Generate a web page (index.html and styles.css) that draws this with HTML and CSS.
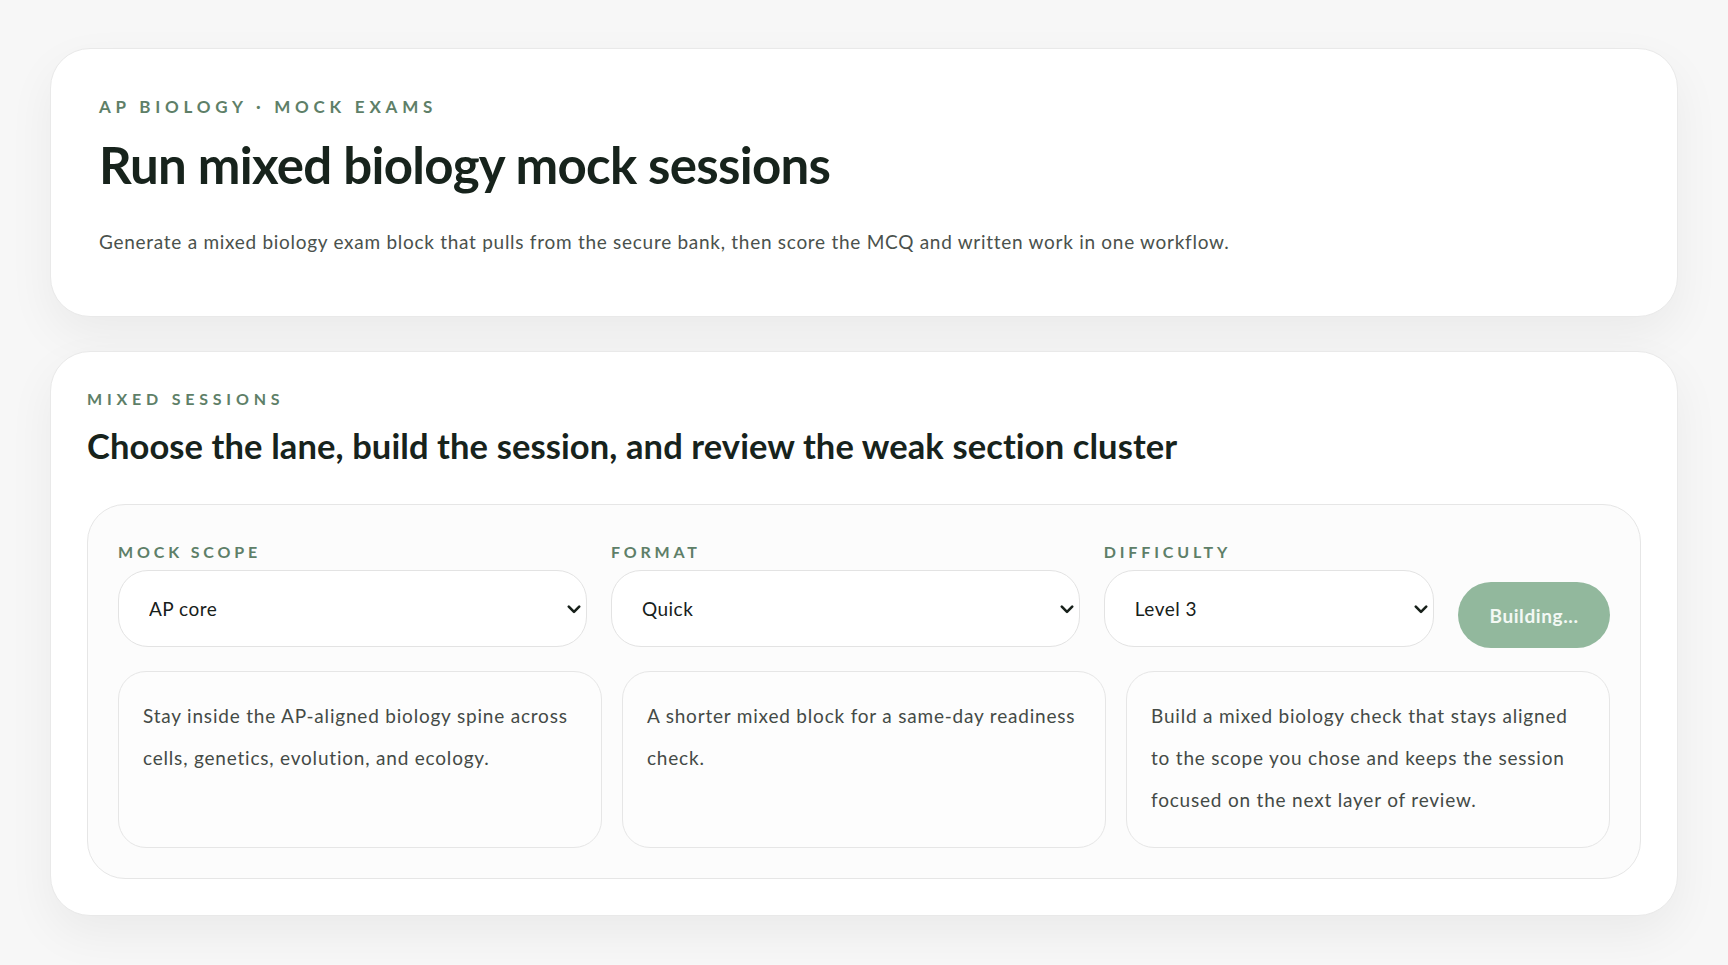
FILE: index.html
```html
<!DOCTYPE html>
<html lang="en">
<head>
<meta charset="utf-8">
<title>AP Biology · Mock Exams</title>
<link rel="stylesheet" href="styles.css">
</head>
<body>
<main class="page">
  <section class="card hero">
    <p class="eyebrow">AP Biology · Mock Exams</p>
    <h1 class="hero-title">Run mixed biology mock sessions</h1>
    <p class="hero-desc">Generate a mixed biology exam block that pulls from the secure bank, then score the MCQ and written work in one workflow.</p>
  </section>

  <section class="card sessions">
    <p class="eyebrow small">Mixed sessions</p>
    <h2 class="section-title">Choose the lane, build the session, and review the weak section cluster</h2>

    <div class="panel">
      <div class="controls">
        <label class="field">
          <span class="field-label">Mock scope</span>
          <span class="select-wrap">
            <select class="select">
              <option>AP core</option>
            </select>
            <svg class="chevron" width="14" height="9" viewBox="0 0 14 9" aria-hidden="true"><path d="M1.8 1.6 L7 6.8 L12.2 1.6" fill="none" stroke="#17201a" stroke-width="2.6" stroke-linecap="round" stroke-linejoin="round"/></svg>
          </span>
        </label>
        <label class="field">
          <span class="field-label">Format</span>
          <span class="select-wrap">
            <select class="select">
              <option>Quick</option>
            </select>
            <svg class="chevron" width="14" height="9" viewBox="0 0 14 9" aria-hidden="true"><path d="M1.8 1.6 L7 6.8 L12.2 1.6" fill="none" stroke="#17201a" stroke-width="2.6" stroke-linecap="round" stroke-linejoin="round"/></svg>
          </span>
        </label>
        <label class="field">
          <span class="field-label">Difficulty</span>
          <span class="select-wrap">
            <select class="select">
              <option>Level 3</option>
            </select>
            <svg class="chevron" width="14" height="9" viewBox="0 0 14 9" aria-hidden="true"><path d="M1.8 1.6 L7 6.8 L12.2 1.6" fill="none" stroke="#17201a" stroke-width="2.6" stroke-linecap="round" stroke-linejoin="round"/></svg>
          </span>
        </label>
        <button class="build-btn" type="button">Building...</button>
      </div>

      <div class="notes">
        <div class="note">Stay inside the AP-aligned biology spine across cells, genetics, evolution, and ecology.</div>
        <div class="note">A shorter mixed block for a same-day readiness check.</div>
        <div class="note">Build a mixed biology check that stays aligned to the scope you chose and keeps the session focused on the next layer of review.</div>
      </div>
    </div>
  </section>
</main>
</body>
</html>
```

FILE: styles.css
```css
* { box-sizing: border-box; }

html, body {
  margin: 0;
  padding: 0;
  background: #f7f7f7;
  font-family: "Lato", "Open Sans", sans-serif;
  color: #17231c;
}

.page {
  padding: 48px 50px 48px;
  display: flex;
  flex-direction: column;
  gap: 34px;
}

.card {
  background: #ffffff;
  border: 1px solid #e9e9e9;
  border-radius: 40px;
  box-shadow: 0 18px 48px rgba(0, 0, 0, 0.055);
}

.hero {
  padding: 47px 48px 60px;
}

.eyebrow {
  margin: 0;
  font-size: 17px;
  line-height: 22px;
  font-weight: 700;
  letter-spacing: 0.28em;
  text-transform: uppercase;
  color: #5e7f68;
}

.eyebrow.small {
  font-size: 16px;
  line-height: 20px;
  letter-spacing: 0.3em;
}

.hero-title {
  margin: 18px 0 0;
  font-size: 51px;
  line-height: 58px;
  font-weight: 700;
  letter-spacing: -0.014em;
  color: #17231c;
}

.hero-desc {
  margin: 34px 0 0;
  font-size: 19px;
  line-height: 28px;
  letter-spacing: 0.72px;
  color: #4a514c;
}

.sessions {
  padding: 37px 36px 36px;
}

.section-title {
  margin: 16px 0 0;
  font-size: 34.5px;
  line-height: 42px;
  font-weight: 700;
  letter-spacing: 0.003em;
  color: #17231c;
}

.panel {
  margin-top: 37px;
  background: #fcfcfc;
  border: 1px solid #e6e6e6;
  border-radius: 38px;
  padding: 37px 30px 30px;
}

.controls {
  display: grid;
  grid-template-columns: 1.42fr 1.42fr 1fr auto;
  gap: 24px;
  align-items: end;
}

.field {
  display: flex;
  flex-direction: column;
  gap: 8px;
  min-width: 0;
}

.field-label {
  font-size: 16px;
  line-height: 20px;
  font-weight: 700;
  letter-spacing: 0.24em;
  text-transform: uppercase;
  color: #5e7f68;
}

.select-wrap {
  position: relative;
  display: block;
}

.select {
  display: block;
  width: 100%;
  height: 77px;
  border: 1px solid #e3e3e3;
  border-radius: 30px;
  background: #ffffff;
  padding: 0 40px 0 30px;
  font-family: "Lato", "Open Sans", sans-serif;
  font-size: 19px;
  letter-spacing: 0.5px;
  color: #17201a;
  appearance: none;
  -webkit-appearance: none;
  outline: none;
}

.chevron {
  position: absolute;
  right: 6px;
  top: 50%;
  margin-top: -4px;
  pointer-events: none;
}

.build-btn {
  width: 152px;
  height: 66px;
  border: none;
  border-radius: 33px;
  background: #92b89d;
  color: #f3f8f4;
  font-family: "Lato", "Open Sans", sans-serif;
  font-size: 19px;
  font-weight: 700;
  letter-spacing: 0.6px;
  margin-bottom: -1px;
}

.notes {
  margin-top: 24px;
  display: grid;
  grid-template-columns: repeat(3, 1fr);
  gap: 20px;
}

.note {
  background: #fdfdfd;
  border: 1px solid #e6e6e6;
  border-radius: 28px;
  padding: 23px 24px 26px;
  font-size: 19px;
  line-height: 42px;
  letter-spacing: 0.8px;
  color: #444a46;
  min-height: 176px;
}
```
